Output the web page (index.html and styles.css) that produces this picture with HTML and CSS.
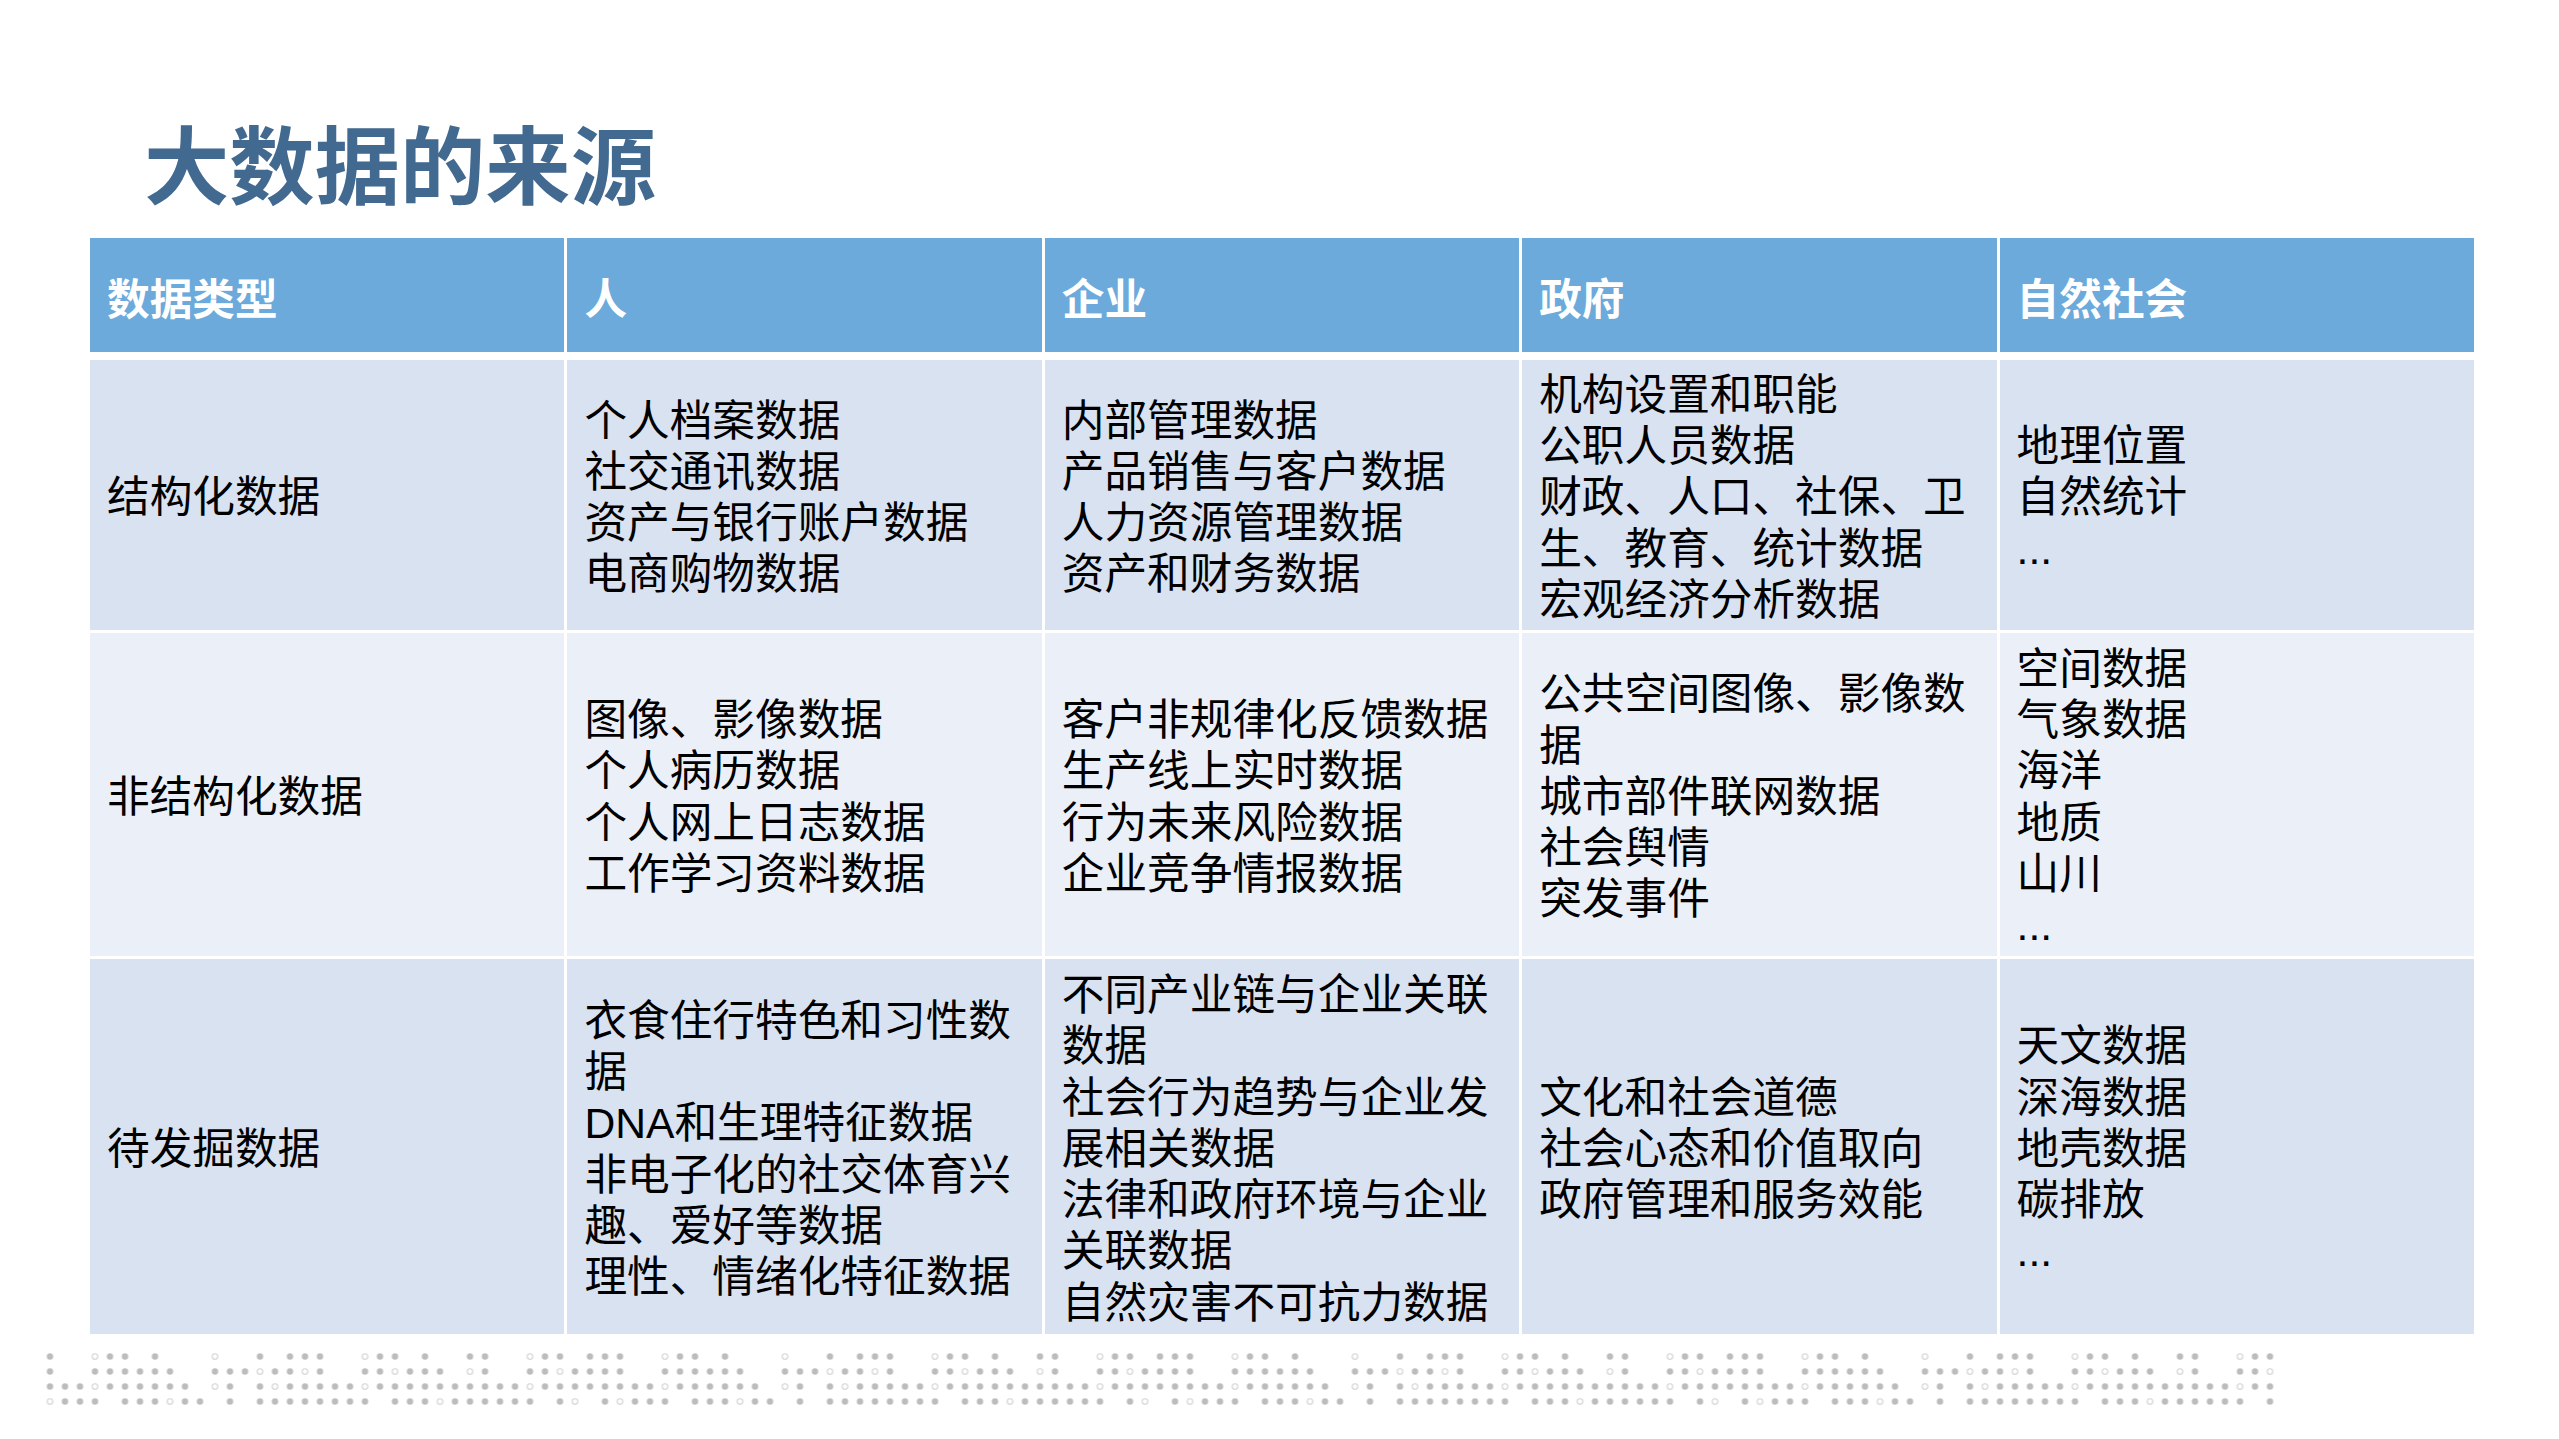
FILE: index.html
```html
<!DOCTYPE html>
<html lang="zh-CN">
<head>
<meta charset="utf-8">
<title>大数据的来源</title>
<link rel="stylesheet" href="styles.css">
</head>
<body>
<div class="slide">
  <h1 class="title">大数据的来源</h1>
  <div class="table">
    <div class="row head">
      <div class="cell">数据类型</div>
      <div class="cell">人</div>
      <div class="cell">企业</div>
      <div class="cell">政府</div>
      <div class="cell">自然社会</div>
    </div>
    <div class="row band r1">
      <div class="cell"><div>结构化数据</div></div>
      <div class="cell"><div><p>个人档案数据</p><p>社交通讯数据</p><p>资产与银行账户数据</p><p>电商购物数据</p></div></div>
      <div class="cell"><div><p>内部管理数据</p><p>产品销售与客户数据</p><p>人力资源管理数据</p><p>资产和财务数据</p></div></div>
      <div class="cell"><div><p>机构设置和职能</p><p>公职人员数据</p><p>财政、人口、社保、卫生、教育、统计数据</p><p>宏观经济分析数据</p></div></div>
      <div class="cell"><div><p>地理位置</p><p>自然统计</p><p>...</p></div></div>
    </div>
    <div class="row light r2">
      <div class="cell"><div>非结构化数据</div></div>
      <div class="cell"><div><p>图像、影像数据</p><p>个人病历数据</p><p>个人网上日志数据</p><p>工作学习资料数据</p></div></div>
      <div class="cell"><div><p>客户非规律化反馈数据</p><p>生产线上实时数据</p><p>行为未来风险数据</p><p>企业竞争情报数据</p></div></div>
      <div class="cell"><div><p>公共空间图像、影像数据</p><p>城市部件联网数据</p><p>社会舆情</p><p>突发事件</p></div></div>
      <div class="cell"><div><p>空间数据</p><p>气象数据</p><p>海洋</p><p>地质</p><p>山川</p><p>...</p></div></div>
    </div>
    <div class="row band r3">
      <div class="cell"><div>待发掘数据</div></div>
      <div class="cell"><div><p>衣食住行特色和习性数据</p><p>DNA和生理特征数据</p><p>非电子化的社交体育兴趣、爱好等数据</p><p>理性、情绪化特征数据</p></div></div>
      <div class="cell"><div><p>不同产业链与企业关联数据</p><p>社会行为趋势与企业发展相关数据</p><p>法律和政府环境与企业关联数据</p><p>自然灾害不可抗力数据</p></div></div>
      <div class="cell"><div><p>文化和社会道德</p><p>社会心态和价值取向</p><p>政府管理和服务效能</p></div></div>
      <div class="cell"><div><p>天文数据</p><p>深海数据</p><p>地壳数据</p><p>碳排放</p><p>...</p></div></div>
    </div>
  </div>
</div>
<svg class="dots" width="2559" height="60" viewBox="0 0 2559 60" aria-hidden="true">
  <defs>
    <filter id="soft" x="-1%" y="-20%" width="102%" height="140%"><feGaussianBlur stdDeviation="0.7"/></filter>
    <pattern id="dotpat" patternUnits="userSpaceOnUse" x="42.5" y="0" width="570" height="60">
      <path class="dot-fill" d="M7.5 7.5h0M67.5 7.5h0M82.5 7.5h0M112.5 7.5h0M217.5 7.5h0M247.5 7.5h0M262.5 7.5h0M277.5 7.5h0M337.5 7.5h0M352.5 7.5h0M382.5 7.5h0M427.5 7.5h0M442.5 7.5h0M502.5 7.5h0M517.5 7.5h0M547.5 7.5h0M562.5 7.5h0
      M7.5 22.5h0M52.5 22.5h0M67.5 22.5h0M82.5 22.5h0M97.5 22.5h0M112.5 22.5h0M127.5 22.5h0M172.5 22.5h0M187.5 22.5h0M202.5 22.5h0M232.5 22.5h0M247.5 22.5h0M277.5 22.5h0M322.5 22.5h0M337.5 22.5h0M367.5 22.5h0M382.5 22.5h0M397.5 22.5h0M442.5 22.5h0M487.5 22.5h0M502.5 22.5h0M532.5 22.5h0M547.5 22.5h0M562.5 22.5h0
      M7.5 37.5h0M22.5 37.5h0M37.5 37.5h0M67.5 37.5h0M82.5 37.5h0M97.5 37.5h0M112.5 37.5h0M127.5 37.5h0M142.5 37.5h0M187.5 37.5h0M217.5 37.5h0M247.5 37.5h0M262.5 37.5h0M277.5 37.5h0M292.5 37.5h0M307.5 37.5h0M337.5 37.5h0M352.5 37.5h0M367.5 37.5h0M382.5 37.5h0M397.5 37.5h0M412.5 37.5h0M427.5 37.5h0M442.5 37.5h0M457.5 37.5h0M472.5 37.5h0M502.5 37.5h0M517.5 37.5h0M532.5 37.5h0M547.5 37.5h0M562.5 37.5h0
      M22.5 52.5h0M37.5 52.5h0M52.5 52.5h0M82.5 52.5h0M97.5 52.5h0M112.5 52.5h0M142.5 52.5h0M157.5 52.5h0M187.5 52.5h0M217.5 52.5h0M232.5 52.5h0M247.5 52.5h0M262.5 52.5h0M277.5 52.5h0M292.5 52.5h0M307.5 52.5h0M322.5 52.5h0M352.5 52.5h0M367.5 52.5h0M382.5 52.5h0M412.5 52.5h0M427.5 52.5h0M442.5 52.5h0M457.5 52.5h0M472.5 52.5h0M487.5 52.5h0M517.5 52.5h0M562.5 52.5h0"/>
      <g class="dot-ring">
        <circle cx="52.5" cy="7.5" r="2.8"/><circle cx="172.5" cy="7.5" r="2.8"/><circle cx="322.5" cy="7.5" r="2.8"/><circle cx="487.5" cy="7.5" r="2.8"/>
        <circle cx="217.5" cy="22.5" r="2.8"/><circle cx="262.5" cy="22.5" r="2.8"/><circle cx="352.5" cy="22.5" r="2.8"/><circle cx="427.5" cy="22.5" r="2.8"/><circle cx="517.5" cy="22.5" r="2.8"/>
        <circle cx="52.5" cy="37.5" r="2.8"/><circle cx="172.5" cy="37.5" r="2.8"/><circle cx="232.5" cy="37.5" r="2.8"/><circle cx="322.5" cy="37.5" r="2.8"/><circle cx="487.5" cy="37.5" r="2.8"/>
        <circle cx="7.5" cy="52.5" r="2.8"/><circle cx="127.5" cy="52.5" r="2.8"/><circle cx="397.5" cy="52.5" r="2.8"/><circle cx="532.5" cy="52.5" r="2.8"/>
      </g>
    </pattern>
  </defs>
  <rect x="42.5" y="0" width="2235" height="60" fill="url(#dotpat)" filter="url(#soft)"/>
</svg>
</body>
</html>
```
FILE: styles.css
```css
html, body {
  margin: 0;
  padding: 0;
  background: #ffffff;
}

body {
  width: 2559px;
  height: 1439px;
  overflow: hidden;
  font-family: "Liberation Sans", "Noto Sans CJK SC", sans-serif;
  color: #000000;
}

.slide {
  padding-top: 118px;
}

.title {
  margin: 0 0 34px 144px;
  font-family: "Noto Sans CJK SC", sans-serif;
  font-weight: 700;
  font-size: 85.33px;
  line-height: 86px;
  color: #426990;
  letter-spacing: 0;
}

.table {
  margin-left: 90px;
  width: 2384px;
  display: flex;
  flex-direction: column;
  gap: 3px;
}

.row {
  display: grid;
  grid-template-columns: repeat(5, 1fr);
  column-gap: 3px;
}

.cell {
  display: flex;
  align-items: center;
  padding: 6px 18px 0 17px;
  font-size: 42.67px;
  line-height: 51.2px;
  min-width: 0;
}

.cell p {
  margin: 0;
}

.head {
  height: 114px;
  margin-bottom: 5px;
}

.head .cell {
  background: #6baadb;
  color: #ffffff;
  font-weight: 700;
  padding-top: 11px;
}

.band .cell {
  background: #d9e2f1;
}

.light .cell {
  background: #ebf0f8;
}

.r1 {
  height: 270px;
}

.r2 {
  height: 323px;
}

.r3 {
  height: 375px;
}

.dots {
  display: block;
  margin-top: 15px;
}

.dot-fill {
  fill: none;
  stroke: #bcbcbc;
  stroke-width: 6.4;
  stroke-linecap: round;
}

.dot-ring circle {
  fill: none;
  stroke: #d2d2d2;
  stroke-width: 1.1;
}
```
